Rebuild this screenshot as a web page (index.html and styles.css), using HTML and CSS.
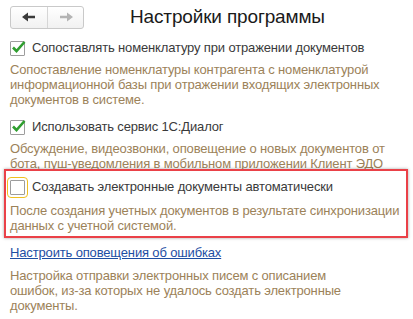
FILE: index.html
```html
<!DOCTYPE html>
<html lang="ru">
<head>
  <meta charset="UTF-8">
  <title>Настройки программы</title>
  <link rel="stylesheet" href="styles.css">
</head>
<body>
  <div class="toolbar">
    <div class="nav">
      <button class="nav-btn">
        <svg width="14" height="10" viewBox="0 0 14 10"><path d="M0 5 L6 0.5 L6 3.8 L13 3.8 L13 6.2 L6 6.2 L6 9.5 Z" fill="#3a3a3a"/></svg>
      </button>
      <button class="nav-btn">
        <svg width="14" height="10" viewBox="0 0 14 10"><path d="M14 5 L8 0.5 L8 3.8 L1 3.8 L1 6.2 L8 6.2 L8 9.5 Z" fill="#b4b4b4"/></svg>
      </button>
    </div>
    <h1 class="title">Настройки программы</h1>
  </div>

  <div class="settings">
    <div class="option">
      <label class="check">
        <span class="box">
          <svg width="17" height="15" viewBox="0 0 17 15"><path d="M3 7.5 L6.5 11 L14.5 2" fill="none" stroke="#2f9e2f" stroke-width="2.6"/></svg>
        </span>
        Сопоставлять номенклатуру при отражении документов
      </label>
      <p class="hint">Сопоставление номенклатуры контрагента с номенклатурой информационной базы при отражении входящих электронных документов в системе.</p>
    </div>

    <div class="option">
      <label class="check">
        <span class="box">
          <svg width="17" height="15" viewBox="0 0 17 15"><path d="M3 7.5 L6.5 11 L14.5 2" fill="none" stroke="#2f9e2f" stroke-width="2.6"/></svg>
        </span>
        Использовать сервис 1С:Диалог
      </label>
      <p class="hint">Обсуждение, видеозвонки, оповещение о новых документов от бота, пуш-уведомления в мобильном приложении Клиент ЭДО</p>
    </div>

    <div class="option marked">
      <label class="check">
        <span class="box focused"></span>
        Создавать электронные документы автоматически
      </label>
      <p class="hint">После создания учетных документов в результате синхронизации данных с учетной системой.</p>
    </div>

    <div class="option">
      <a class="link" href="#">Настроить оповещения об ошибках</a>
      <p class="hint narrow">Настройка отправки электронных писем с описанием ошибок, из-за которых не удалось создать электронные документы.</p>
    </div>
  </div>
</body>
</html>
```

FILE: styles.css
```css
body {
  margin: 0;
  background-color: #fff;
  font-family: Arial, "Liberation Sans", sans-serif;
  font-size: 13px;
  letter-spacing: -0.15px;
  color: #3a3a3a;
}
.toolbar {
  display: flex;
  align-items: center;
  height: 34px;
  padding-left: 10px;
}
.nav {
  display: flex;
  height: 23px;
  border: 1px solid #c9c9c9;
  border-radius: 3px;
  box-sizing: border-box;
  background: linear-gradient(#ffffff, #f1f1f1);
}
.nav-btn {
  width: 36px;
  height: 100%;
  padding: 0;
  border: none;
  background: transparent;
  display: flex;
  align-items: center;
  justify-content: center;
}
.nav-btn + .nav-btn {
  border-left: 1px solid #d6d6d6;
}
.title {
  margin: 0 0 0 46px;
  font-size: 19px;
  font-weight: normal;
  color: #1a1a1a;
}
.settings {
  display: flex;
  flex-direction: column;
  padding: 6px 5px 0 4px;
}
.option {
  padding: 0 2px 0 6px;
}
.option + .option {
  margin-top: 12px;
}
.check {
  display: flex;
  align-items: center;
  height: 16px;
  line-height: 16px;
}
.box {
  position: relative;
  width: 13px;
  height: 13px;
  border: 1px solid #9d9d9d;
  border-radius: 1px;
  background: #fff;
  margin-right: 7px;
  flex: none;
}
.box svg {
  position: absolute;
  left: -1px;
  top: -2px;
}
.box.focused {
  outline: 1px solid #f0c020;
  outline-offset: 2px;
}
.hint {
  margin: 6px 0 0;
  line-height: 15px;
  color: #9c8259;
}
.hint.narrow {
  max-width: 345px;
}
.option + .marked {
  margin-top: -2px;
}
.marked {
  padding: 8px 0 3px 4px;
  border: 2px solid #ea4148;
  box-shadow: 0 0 3px rgba(0, 0, 0, 0.35);
}
.marked + .option {
  margin-top: 7px;
}
.marked .hint {
  margin-top: 8px;
}
.link {
  display: block;
  line-height: 16px;
  color: #1d4ea3;
  text-decoration: underline;
}
.link + .hint {
  margin-top: 7px;
}
```
